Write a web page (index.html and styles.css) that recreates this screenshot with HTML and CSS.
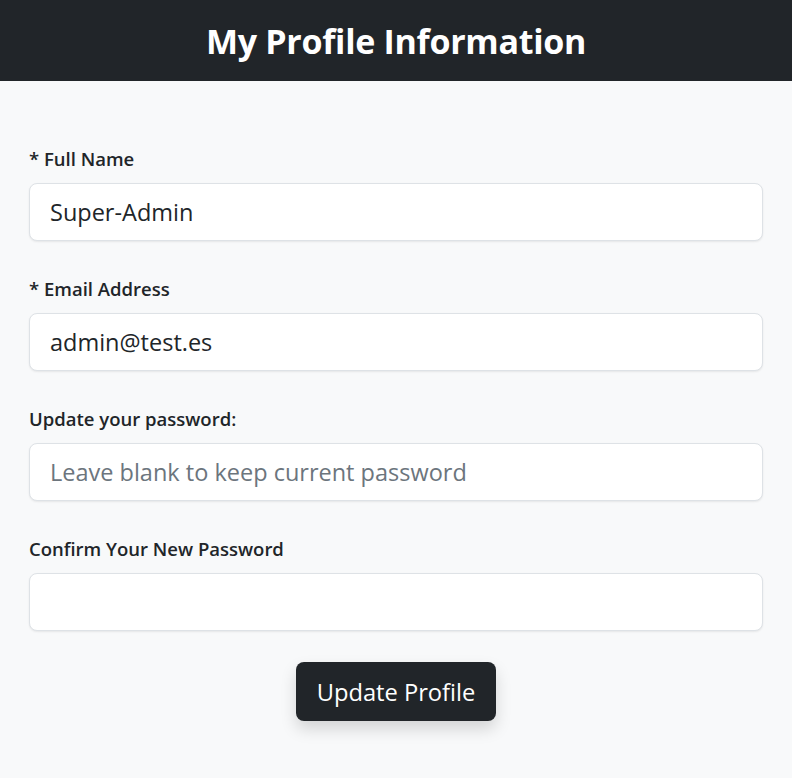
FILE: index.html
```html
<!DOCTYPE html>
<html>
<head>
<meta charset="utf-8">
<link rel="stylesheet" href="styles.css">
</head>
<body>
<header class="topbar"><h1 class="title">My Profile Information</h1></header>
<main class="page">
  <form class="profile-form">
    <div class="fields">
      <div class="field">
        <label class="label">* Full Name</label>
        <input class="input" type="text" value="Super-Admin">
      </div>
      <div class="field">
        <label class="label">* Email Address</label>
        <input class="input" type="text" value="admin@test.es">
      </div>
      <div class="field">
        <label class="label">Update your password:</label>
        <input class="input" type="password" placeholder="Leave blank to keep current password">
      </div>
      <div class="field">
        <label class="label">Confirm Your New Password</label>
        <input class="input" type="password">
      </div>
    </div>
    <div class="actions"><button class="btn" type="button">Update Profile</button></div>
  </form>
</main>
</body>
</html>
```
FILE: styles.css
```css
* { box-sizing: border-box; }
html, body { margin: 0; height: 100%; }
body {
  background: #f8f9fa;
  font-family: "Open Sans", "Noto Sans", sans-serif;
  color: #212529;
}
.topbar {
  background: #212529;
  height: 81px;
  display: flex;
  align-items: center;
  justify-content: center;
}
.title {
  margin: 0;
  color: #fff;
  font-size: 34px;
  font-weight: 700;
  letter-spacing: -0.3px;
}
.page { padding: 64px 29px 30px; }
.fields { display: flex; flex-direction: column; gap: 34px; }
.field { display: flex; flex-direction: column; }
.label {
  font-size: 18.5px;
  font-weight: 600;
  line-height: 27px;
  margin-bottom: 11px;
}
.input {
  height: 58px;
  border: 1px solid #dee2e6;
  border-radius: 8px;
  background: #fff;
  padding: 0 20px;
  font-family: inherit;
  font-size: 23.5px;
  color: #212529;
  box-shadow: 0 1px 2px rgba(0,0,0,0.075);
  outline: none;
}
.input::placeholder { color: #6c757d; }
.actions { display: flex; justify-content: center; margin-top: 31px; }
.btn {
  background: #212529;
  color: #fff;
  border: none;
  border-radius: 8px;
  height: 59px;
  padding: 0 21px;
  font-family: inherit;
  font-size: 23.7px;
  box-shadow: 0 8px 16px rgba(0,0,0,0.15);
}
```
